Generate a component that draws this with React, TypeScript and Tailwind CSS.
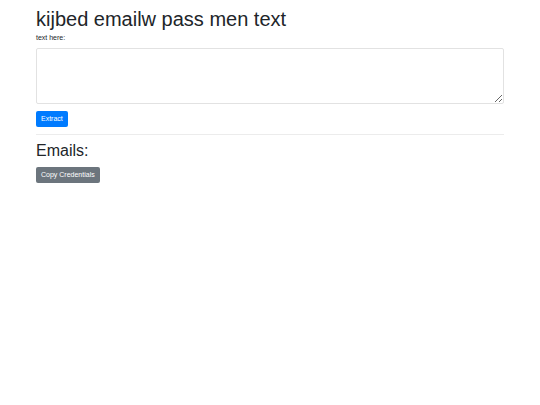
export default function App() {
  return (
    <div className="min-h-[405px] bg-white font-['Liberation_Sans',Arial,sans-serif] text-[#212529]">
      <div className="mx-[36px] pt-[7px]">
        <h1 className="text-[20px] leading-[24px] font-normal">kijbed emailw pass men text</h1>
        <label className="block mt-[2px] text-[7px] leading-[10px] text-[#212529]">text here:</label>
        <textarea className="mt-[5px] block w-full h-[56px] rounded-[2px] border border-[#e2e2e2] bg-white" />
        <button className="mt-[7px] h-[16px] px-[5px] rounded-[2px] bg-[#007bff] text-white text-[7px] leading-[16px]">
          Extract
        </button>
        <hr className="mt-[6px] border-t border-[#ececec]" />
        <h2 className="mt-[6px] text-[16px] leading-[19px] font-normal">Emails:</h2>
        <button className="mt-[6px] h-[16px] px-[5px] rounded-[2px] bg-[#6c757d] text-white text-[7px] leading-[16px]">
          Copy Credentials
        </button>
      </div>
    </div>
  );
}
